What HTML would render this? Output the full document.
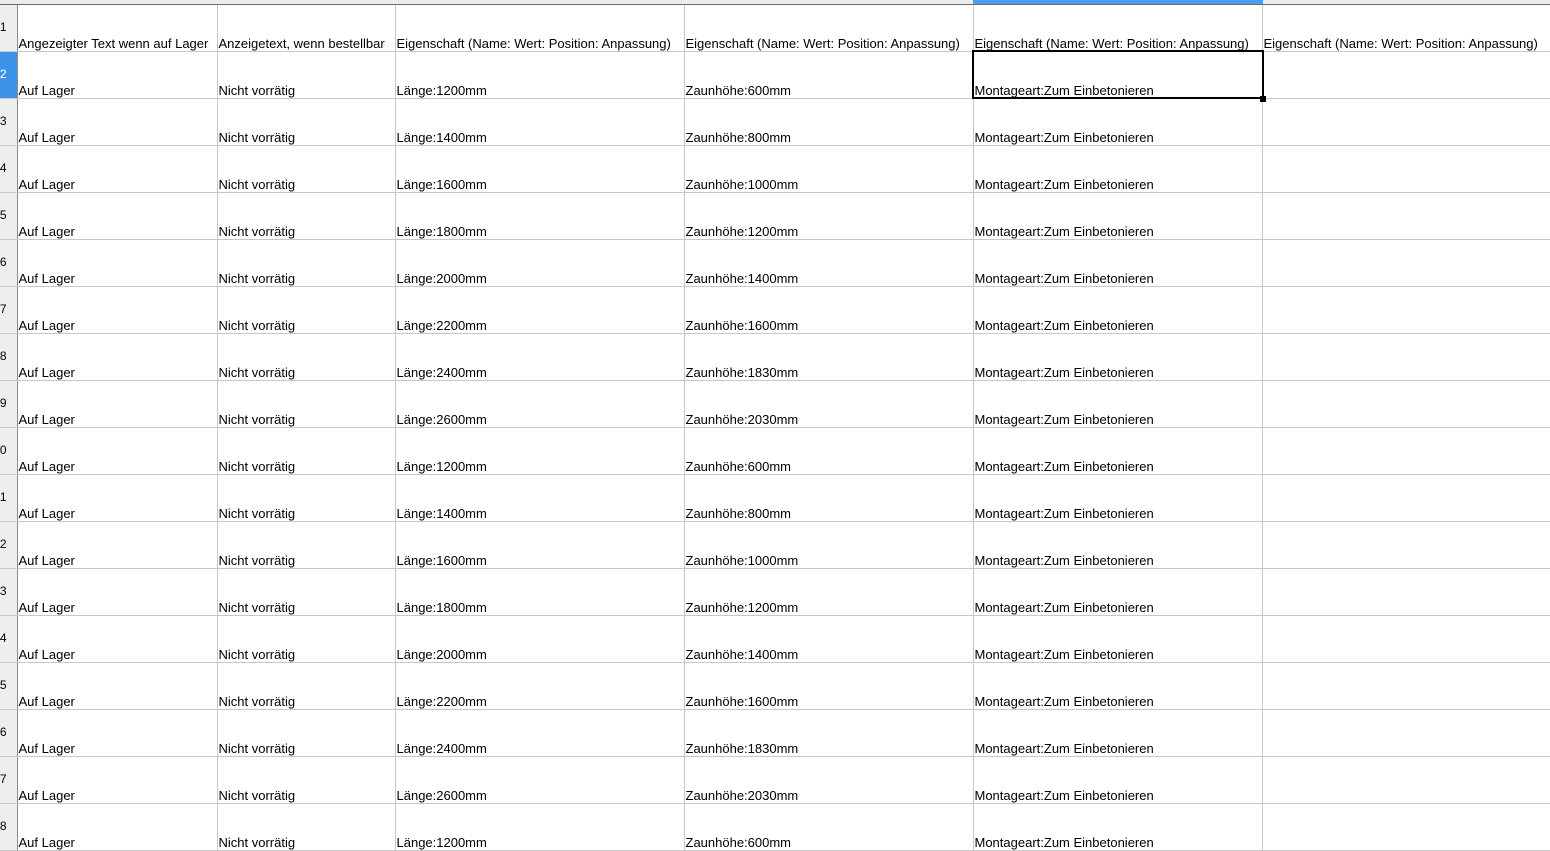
<!DOCTYPE html>
<html><head><meta charset="utf-8"><style>
html,body{margin:0;padding:0;width:1550px;height:841px;overflow:hidden;background:#fff;font-family:"Liberation Sans",Arial,sans-serif;font-size:13px;color:#000}
.top{position:absolute;left:0;top:0;width:1550px;height:4px;background:#ececec;border-bottom:1px solid #6b6b6b}
.sel{position:absolute;left:973px;top:0;width:290px;height:4px;background:#4a9ff0}
table{position:absolute;left:0;top:5px;border-collapse:collapse;table-layout:fixed;width:1570px}
td{height:46px;border-right:1px solid #c8c8c8;border-bottom:1px solid #c8c8c8;vertical-align:bottom;padding:0 0 0 1px;white-space:nowrap;overflow:hidden;line-height:15px;box-sizing:content-box}
td.h{background:#eeeeee;border-right:1px solid #8a8a8a;position:relative;padding:0;height:46px}
td.h span{position:absolute;right:10px;top:15px;font-size:12px}
td.hs{background:#3d93ea;color:#fff}
.box{position:absolute;left:972px;top:50px;width:288px;height:45px;border:2px solid #000}
.hd{position:absolute;left:1260px;top:96px;width:6px;height:6px;background:#000}
</style></head><body>
<div class="top"></div><div class="sel"></div>
<table>
<colgroup><col style="width:17px"><col style="width:200px"><col style="width:178px"><col style="width:289px"><col style="width:289px"><col style="width:289px"><col style="width:308px"></colgroup>
<tr><td class="h"><span>1</span></td><td>Angezeigter Text wenn auf Lager</td><td>Anzeigetext, wenn bestellbar</td><td>Eigenschaft (Name: Wert: Position: Anpassung)</td><td>Eigenschaft (Name: Wert: Position: Anpassung)</td><td>Eigenschaft (Name: Wert: Position: Anpassung)</td><td>Eigenschaft (Name: Wert: Position: Anpassung)</td></tr>
<tr><td class="h hs"><span>2</span></td><td>Auf Lager</td><td>Nicht vorrätig</td><td>Länge:1200mm</td><td>Zaunhöhe:600mm</td><td>Montageart:Zum Einbetonieren</td><td></td></tr>
<tr><td class="h"><span>3</span></td><td>Auf Lager</td><td>Nicht vorrätig</td><td>Länge:1400mm</td><td>Zaunhöhe:800mm</td><td>Montageart:Zum Einbetonieren</td><td></td></tr>
<tr><td class="h"><span>4</span></td><td>Auf Lager</td><td>Nicht vorrätig</td><td>Länge:1600mm</td><td>Zaunhöhe:1000mm</td><td>Montageart:Zum Einbetonieren</td><td></td></tr>
<tr><td class="h"><span>5</span></td><td>Auf Lager</td><td>Nicht vorrätig</td><td>Länge:1800mm</td><td>Zaunhöhe:1200mm</td><td>Montageart:Zum Einbetonieren</td><td></td></tr>
<tr><td class="h"><span>6</span></td><td>Auf Lager</td><td>Nicht vorrätig</td><td>Länge:2000mm</td><td>Zaunhöhe:1400mm</td><td>Montageart:Zum Einbetonieren</td><td></td></tr>
<tr><td class="h"><span>7</span></td><td>Auf Lager</td><td>Nicht vorrätig</td><td>Länge:2200mm</td><td>Zaunhöhe:1600mm</td><td>Montageart:Zum Einbetonieren</td><td></td></tr>
<tr><td class="h"><span>8</span></td><td>Auf Lager</td><td>Nicht vorrätig</td><td>Länge:2400mm</td><td>Zaunhöhe:1830mm</td><td>Montageart:Zum Einbetonieren</td><td></td></tr>
<tr><td class="h"><span>9</span></td><td>Auf Lager</td><td>Nicht vorrätig</td><td>Länge:2600mm</td><td>Zaunhöhe:2030mm</td><td>Montageart:Zum Einbetonieren</td><td></td></tr>
<tr><td class="h"><span>10</span></td><td>Auf Lager</td><td>Nicht vorrätig</td><td>Länge:1200mm</td><td>Zaunhöhe:600mm</td><td>Montageart:Zum Einbetonieren</td><td></td></tr>
<tr><td class="h"><span>11</span></td><td>Auf Lager</td><td>Nicht vorrätig</td><td>Länge:1400mm</td><td>Zaunhöhe:800mm</td><td>Montageart:Zum Einbetonieren</td><td></td></tr>
<tr><td class="h"><span>12</span></td><td>Auf Lager</td><td>Nicht vorrätig</td><td>Länge:1600mm</td><td>Zaunhöhe:1000mm</td><td>Montageart:Zum Einbetonieren</td><td></td></tr>
<tr><td class="h"><span>13</span></td><td>Auf Lager</td><td>Nicht vorrätig</td><td>Länge:1800mm</td><td>Zaunhöhe:1200mm</td><td>Montageart:Zum Einbetonieren</td><td></td></tr>
<tr><td class="h"><span>14</span></td><td>Auf Lager</td><td>Nicht vorrätig</td><td>Länge:2000mm</td><td>Zaunhöhe:1400mm</td><td>Montageart:Zum Einbetonieren</td><td></td></tr>
<tr><td class="h"><span>15</span></td><td>Auf Lager</td><td>Nicht vorrätig</td><td>Länge:2200mm</td><td>Zaunhöhe:1600mm</td><td>Montageart:Zum Einbetonieren</td><td></td></tr>
<tr><td class="h"><span>16</span></td><td>Auf Lager</td><td>Nicht vorrätig</td><td>Länge:2400mm</td><td>Zaunhöhe:1830mm</td><td>Montageart:Zum Einbetonieren</td><td></td></tr>
<tr><td class="h"><span>17</span></td><td>Auf Lager</td><td>Nicht vorrätig</td><td>Länge:2600mm</td><td>Zaunhöhe:2030mm</td><td>Montageart:Zum Einbetonieren</td><td></td></tr>
<tr><td class="h"><span>18</span></td><td>Auf Lager</td><td>Nicht vorrätig</td><td>Länge:1200mm</td><td>Zaunhöhe:600mm</td><td>Montageart:Zum Einbetonieren</td><td></td></tr>
</table>
<div class="box"></div><div class="hd"></div>
</body></html>
